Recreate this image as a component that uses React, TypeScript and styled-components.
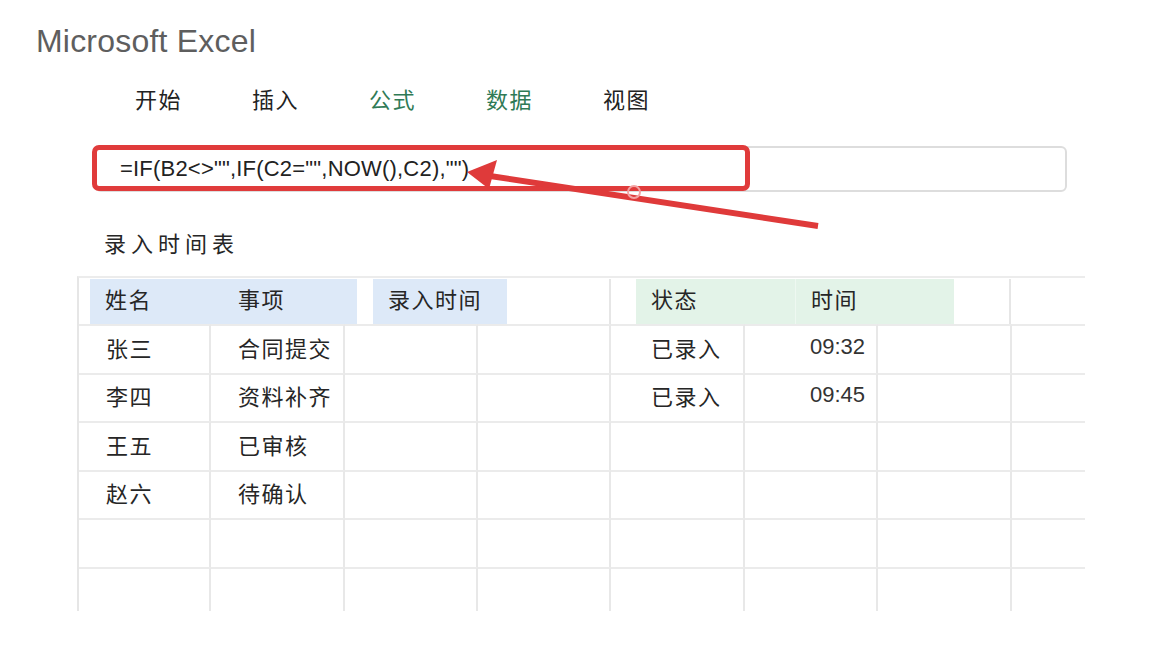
import React from 'react';
import styled, { createGlobalStyle } from 'styled-components';

const GlobalStyle = createGlobalStyle`
	html, body {
		margin: 0;
		padding: 0;
		background: #ffffff;
	}
	* {
		box-sizing: border-box;
	}
`;

const CJK = `"Noto Sans CJK SC", "Noto Sans", sans-serif`;

const Page = styled.div`
	position: relative;
	width: 1167px;
	height: 667px;
	overflow: hidden;
	background: #ffffff;
	font-family: ${CJK};
	color: #262626;
`;

const Title = styled.div`
	padding: 21px 0 0 36px;
	height: 64px;
	font-family: 'Liberation Sans', Arial, sans-serif;
	font-size: 32px;
	line-height: 40px;
	color: #5e5e5e;
	letter-spacing: 0.2px;
`;

const Nav = styled.nav`
	display: flex;
	gap: 70px;
	padding-left: 135px;
	height: 82px;
	padding-top: 20px;
`;

interface NavItemProps {
	$active?: boolean;
}

const NavItem = styled.span<NavItemProps>`
	font-size: 22px;
	line-height: 28px;
	letter-spacing: 1.5px;
	color: ${(props) => (props.$active ? '#2f7a56' : '#222222')};
`;

const FormulaArea = styled.div`
	position: relative;
	margin-left: 95px;
	width: 972px;
	height: 46px;
`;

const FormulaBar = styled.div`
	height: 100%;
	border: 2px solid #dddddd;
	border-radius: 6px;
	display: flex;
	align-items: center;
	padding-left: 23px;
	font-family: 'Liberation Sans', Arial, sans-serif;
	font-size: 22px;
	letter-spacing: 0.2px;
	color: #222222;
`;

const Highlight = styled.div`
	position: absolute;
	left: -3px;
	top: -1px;
	width: 658px;
	height: 46px;
	border: 5px solid #e03b3b;
	border-radius: 7px;
`;

const SectionTitle = styled.div`
	padding: 35px 0 0 104px;
	height: 84px;
	font-size: 22px;
	line-height: 30px;
	letter-spacing: 5px;
	color: #262626;
`;

const Table = styled.div`
	margin-left: 77px;
	width: 1008px;
	border-top: 2px solid #ececec;
	border-left: 2px solid #e6e6e6;
`;

const HeaderRow = styled.div`
	display: flex;
	height: 46px;
	padding: 1px 0 0 0;
`;

interface GapProps {
	$w: number;
	$line?: boolean;
}

const Gap = styled.div<GapProps>`
	width: ${(props) => props.$w}px;
	flex: none;
	border-right: ${(props) => (props.$line ? '2px solid #e6e6e6' : 'none')};
`;

interface BandProps {
	$tone: 'blue' | 'green';
	$w: number;
}

const Band = styled.div<BandProps>`
	display: flex;
	width: ${(props) => props.$w}px;
	flex: none;
	background: ${(props) => (props.$tone === 'blue' ? '#dde9f8' : '#e3f3e8')};
`;

interface HeadCellProps {
	$w: number;
	$divider?: boolean;
}

const HeadCell = styled.div<HeadCellProps>`
	width: ${(props) => props.$w}px;
	flex: none;
	display: flex;
	align-items: center;
	padding: 0 0 7px 15px;
	font-size: 22px;
	letter-spacing: 1.5px;
	color: #262626;
	border-right: ${(props) => (props.$divider ? '1px solid #eef8f1' : 'none')};
`;

const Body = styled.div`
	display: grid;
	grid-template-columns: 132px 134px 133px 133px 134px 133px 134px 73px;
	grid-template-rows: repeat(5, 48.5px) 44px;
`;

interface CellProps {
	$indent: number;
	$last?: boolean;
}

const Cell = styled.div<CellProps>`
	display: flex;
	align-items: center;
	padding-left: ${(props) => props.$indent}px;
	padding-bottom: 5px;
	border-top: 2px solid #ebebeb;
	border-right: ${(props) => (props.$last ? 'none' : '2px solid #e8e8e8')};
	font-size: 22px;
	letter-spacing: 1.5px;
	color: #262626;
	white-space: nowrap;
`;

const Time = styled.span`
	font-family: 'Liberation Sans', Arial, sans-serif;
	letter-spacing: 0;
	font-size: 22px;
	color: #333333;
`;

const Annotation = styled.svg`
	position: absolute;
	left: 0;
	top: 0;
	pointer-events: none;
`;

const indents = [27, 27, 20, 20, 40, 65, 20, 20];

const rows: string[][] = [
	['张三', '合同提交', '', '', '已录入', '09:32', '', ''],
	['李四', '资料补齐', '', '', '已录入', '09:45', '', ''],
	['王五', '已审核', '', '', '', '', '', ''],
	['赵六', '待确认', '', '', '', '', '', ''],
	['', '', '', '', '', '', '', ''],
	['', '', '', '', '', '', '', ''],
];

const App: React.FC = () => {
	return (
		<Page>
			<GlobalStyle />
			<Title>Microsoft Excel</Title>
			<Nav>
				<NavItem>开始</NavItem>
				<NavItem>插入</NavItem>
				<NavItem $active>公式</NavItem>
				<NavItem $active>数据</NavItem>
				<NavItem>视图</NavItem>
			</Nav>
			<FormulaArea>
				<FormulaBar>=IF(B2&lt;&gt;"",IF(C2="",NOW(),C2),"")</FormulaBar>
				<Highlight />
			</FormulaArea>
			<SectionTitle>录入时间表</SectionTitle>
			<Table>
				<HeaderRow>
					<Gap $w={11} />
					<Band $tone="blue" $w={267}>
						<HeadCell $w={133}>姓名</HeadCell>
						<HeadCell $w={134}>事项</HeadCell>
					</Band>
					<Gap $w={16} />
					<Band $tone="blue" $w={134}>
						<HeadCell $w={134}>录入时间</HeadCell>
					</Band>
					<Gap $w={104} $line />
					<Gap $w={25} />
					<Band $tone="green" $w={318}>
						<HeadCell $w={160} $divider>
							状态
						</HeadCell>
						<HeadCell $w={158}>时间</HeadCell>
					</Band>
					<Gap $w={57} $line />
				</HeaderRow>
				<Body>
					{rows.map((row, r) =>
						row.map((text, c) => (
							<Cell key={`${r}-${c}`} $indent={indents[c]} $last={c === 7}>
								{c === 5 && text ? <Time>{text}</Time> : text}
							</Cell>
						))
					)}
				</Body>
			</Table>
			<Annotation width="1167" height="667" viewBox="0 0 1167 667">
				<line x1="818" y1="226" x2="490" y2="176" stroke="#df3a3a" strokeWidth="6" />
				<polygon points="467,172 497,160 489,189" fill="#df3a3a" />
				<circle cx="634" cy="192" r="6" fill="none" stroke="#f3a3a3" strokeWidth="2" />
			</Annotation>
		</Page>
	);
};

export default App;
